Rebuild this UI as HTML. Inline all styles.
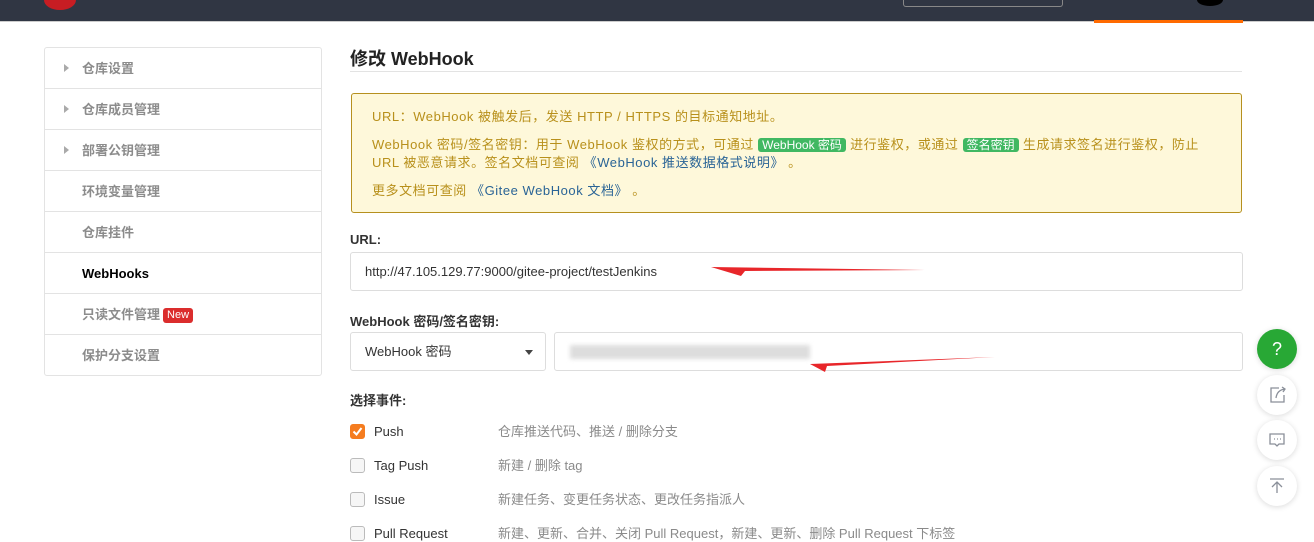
<!DOCTYPE html>
<html><head><meta charset="utf-8"><style>
*{box-sizing:border-box;margin:0;padding:0}
body{width:1314px;height:536px;overflow:hidden;background:#fff;font-family:"Liberation Sans","Noto Sans CJK SC",sans-serif;font-size:13px;color:#333;position:relative}
.top{position:absolute;left:0;top:0;width:1314px;height:22px;background:#303643;border-bottom:1px solid #ccc}
.abs{position:absolute}
.side{position:absolute;left:44px;top:47px;width:278px;height:329px;border:1px solid #e3e3e3;border-radius:3px}
.side div{height:41px;border-bottom:1px solid #e3e3e3;line-height:42px;padding-left:37px;color:#8c8c8c;font-size:13px;font-weight:bold;position:relative}
.side div:last-child{border-bottom:none}
.side .ar:before{content:"";position:absolute;left:19px;top:16px;border-left:5px solid #aaa;border-top:4px solid transparent;border-bottom:4px solid transparent}
.new{display:inline-block;background:#db2d2d;color:#fff;font-size:11px;font-weight:normal;line-height:15px;padding:0 4px;border-radius:3px;vertical-align:1px;margin-left:3px}
.box{position:absolute;left:351px;top:93px;width:891px;height:120px;background:#fef8da;border:1px solid #b6901e;border-radius:3px;color:#b8901b;font-size:13px;padding:14px 20px;letter-spacing:0.55px}
.box p{line-height:18px}
.tag{background:#40b862;color:#fff;border-radius:3px;padding:0 4px;font-size:12px;letter-spacing:0}
.lnk{color:#2a6496}
.inp{position:absolute;border:1px solid #ddd;border-radius:3px;height:39px;line-height:37px;padding-left:14px;font-size:13px}
.lbl{position:absolute;left:350px;font-weight:bold;font-size:13px}
.cb{position:absolute;left:350px;width:15px;height:15px;border:1px solid #bbb;border-radius:3px;background:#f6f6f6}
.ev{position:absolute;left:374px;font-size:13px;line-height:16px}
.ds{position:absolute;left:498px;color:#8a8a8a;font-size:13px;line-height:16px}
.fab{position:absolute;left:1257px;width:40px;height:40px;border-radius:50%;background:#fff;box-shadow:0 1px 6px rgba(0,0,0,.15)}
</style></head><body>
<div class="top"></div>
<div class="abs" style="left:44px;top:-10px;width:32px;height:20px;border-radius:50%;background:#c71d23"></div>
<div class="abs" style="left:903px;top:0;width:160px;height:7px;border:1px solid #888;border-top:none;border-radius:0 0 3px 3px"></div>
<div class="abs" style="left:1197px;top:-6px;width:26px;height:12px;border-radius:50%;background:#000"></div>
<div class="abs" style="left:1094px;top:20px;width:149px;height:3px;background:#ff6a00"></div>

<div class="side">
<div class="ar">仓库设置</div>
<div class="ar">仓库成员管理</div>
<div class="ar">部署公钥管理</div>
<div>环境变量管理</div>
<div>仓库挂件</div>
<div style="color:#000">WebHooks</div>
<div>只读文件管理<span class="new">New</span></div>
<div>保护分支设置</div>
</div>

<div class="abs" style="left:350px;top:45px;font-size:18px;font-weight:bold;color:#222">修改 WebHook</div>
<div class="abs" style="left:350px;top:71px;width:892px;height:1px;background:#e3e3e3"></div>

<div class="box">
<p>URL：WebHook 被触发后，发送 HTTP / HTTPS 的目标通知地址。</p>
<p style="margin-top:10px">WebHook 密码/签名密钥：用于 WebHook 鉴权的方式，可通过 <span class="tag">WebHook 密码</span> 进行鉴权，或通过 <span class="tag">签名密钥</span> 生成请求签名进行鉴权，防止<br>URL 被恶意请求。签名文档可查阅 <span class="lnk">《WebHook 推送数据格式说明》</span> 。</p>
<p style="margin-top:10px">更多文档可查阅 <span class="lnk">《Gitee WebHook 文档》</span> 。</p>
</div>

<div class="lbl" style="top:232px">URL:</div>
<div class="inp" style="left:350px;top:252px;width:893px">http://47.105.129.77:9000/gitee-project/testJenkins</div>
<svg class="abs" style="left:705px;top:258px" width="225" height="22"><polygon points="6,9 220,12 40,13 36,18" fill="#e8262a"/></svg>

<div class="lbl" style="top:311px">WebHook 密码/签名密钥:</div>
<div class="inp" style="left:350px;top:332px;width:196px">WebHook 密码<span style="position:absolute;right:12px;top:17px;border-top:5px solid #444;border-left:4px solid transparent;border-right:4px solid transparent"></span></div>
<div class="inp" style="left:554px;top:332px;width:689px"></div>
<div class="abs" style="left:570px;top:345px;width:240px;height:14px;background:#ddd;filter:blur(2px)"></div>
<svg class="abs" style="left:805px;top:352px" width="195" height="24"><polygon points="5,12 190,5 22,14 20,20" fill="#e8262a"/></svg>

<div class="lbl" style="top:390px">选择事件:</div>
<div class="cb" style="top:424px;background:#f57c1f;border-color:#f57c1f"><svg width="13" height="13" style="position:absolute;left:0;top:0"><path d="M2.5 6.5 L5.5 9.5 L10.5 3" stroke="#fff" stroke-width="2" fill="none"/></svg></div>
<div class="ev" style="top:424px">Push</div><div class="ds" style="top:424px">仓库推送代码、推送 / 删除分支</div>
<div class="cb" style="top:458px"></div><div class="ev" style="top:458px">Tag Push</div><div class="ds" style="top:458px">新建 / 删除 tag</div>
<div class="cb" style="top:492px"></div><div class="ev" style="top:492px">Issue</div><div class="ds" style="top:492px">新建任务、变更任务状态、更改任务指派人</div>
<div class="cb" style="top:526px"></div><div class="ev" style="top:526px">Pull Request</div><div class="ds" style="top:526px">新建、更新、合并、关闭 Pull Request，新建、更新、删除 Pull Request 下标签</div>

<div class="fab" style="top:329px;background:#28a835;color:#fff;text-align:center;line-height:40px;font-size:18px">?</div>
<div class="fab" style="top:375px"><svg width="40" height="40"><path d="M22 13 H14 V27 H27 V20" stroke="#8a8f99" fill="none" stroke-width="1.3"/><path d="M19 23 Q20 15 28 14 M25 12 L28 14 L26 17" stroke="#8a8f99" fill="none" stroke-width="1.3"/></svg></div>
<div class="fab" style="top:420px"><svg width="40" height="40"><path d="M13 14 H27 V24 H22 L20 26 L18 24 H13 Z" stroke="#8a8f99" fill="none" stroke-width="1.3"/><path d="M17 19h1M20 19h1M23 19h1" stroke="#8a8f99" stroke-width="1.3"/></svg></div>
<div class="fab" style="top:466px"><svg width="40" height="40"><path d="M13 13 H27 M20 27 V16 M15 21 L20 16 L25 21" stroke="#8a8f99" fill="none" stroke-width="1.3"/></svg></div>
</body></html>
